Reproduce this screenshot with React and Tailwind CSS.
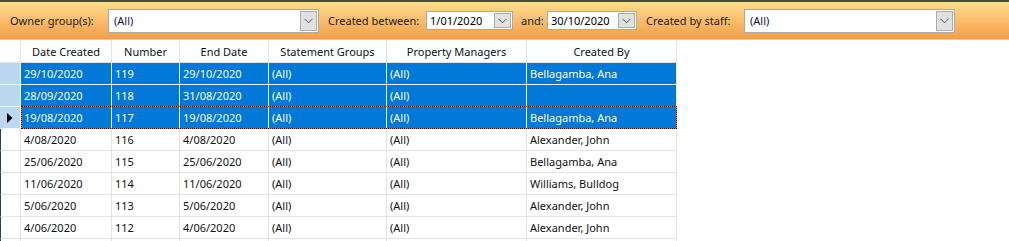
import React from 'react';

const cols = [
  { key: 'created', label: 'Date Created', w: 'w-[91px]' },
  { key: 'num', label: 'Number', w: 'w-[68px]' },
  { key: 'end', label: 'End Date', w: 'w-[89px]' },
  { key: 'groups', label: 'Statement Groups', w: 'w-[118px]' },
  { key: 'managers', label: 'Property Managers', w: 'w-[140px]' },
  { key: 'by', label: 'Created By', w: 'w-[150px]' },
];

const rows = [
  ['29/10/2020', '119', '29/10/2020', '(All)', '(All)', 'Bellagamba, Ana'],
  ['28/09/2020', '118', '31/08/2020', '(All)', '(All)', ''],
  ['19/08/2020', '117', '19/08/2020', '(All)', '(All)', 'Bellagamba, Ana'],
  ['4/08/2020', '116', '4/08/2020', '(All)', '(All)', 'Alexander, John'],
  ['25/06/2020', '115', '25/06/2020', '(All)', '(All)', 'Bellagamba, Ana'],
  ['11/06/2020', '114', '11/06/2020', '(All)', '(All)', 'Williams, Bulldog'],
  ['5/06/2020', '113', '5/06/2020', '(All)', '(All)', 'Alexander, John'],
  ['4/06/2020', '112', '4/06/2020', '(All)', '(All)', 'Alexander, John'],
  ['', '', '', '', '', ''],
];

const selected = [0, 1, 2];
const current = 2;

const Chevron = () => (
  <svg width="9" height="6" viewBox="0 0 9 6" fill="none">
    <path d="M0.5 0.8 L4.5 4.8 L8.5 0.8" stroke="#555" strokeWidth="1" />
  </svg>
);

const DropButton = ({ h }) => (
  <div className={`flex ${h} w-[17px] items-center justify-center border border-[#adadad] bg-[#e1e1e1]`}>
    <Chevron />
  </div>
);

const Combo = ({ w, value }) => (
  <div className={`flex h-[24px] ${w} shrink-0 items-center justify-between border border-[#a9a9a9] bg-white pl-[5px] pr-[1px]`}>
    <span className="text-[#1a0a4a]">{value}</span>
    <DropButton h="h-[20px]" />
  </div>
);

const DateBox = ({ w, value }) => (
  <div className={`flex h-[19px] ${w} shrink-0 items-center justify-between border border-[#a9a9a9] bg-white pl-[3px] pr-[1px]`}>
    <span className="text-black">{value}</span>
    <DropButton h="h-[15px]" />
  </div>
);

export default function App() {
  return (
    <div
      className="h-[241px] w-[1009px] overflow-hidden bg-white text-[11px] leading-none text-black"
      style={{ fontFamily: '"Noto Sans", "Open Sans", sans-serif' }}
    >
      {/* filter bar */}
      <div className="flex h-[40px] items-center border-t-2 border-b border-t-[#4a4a4a] border-b-[#cfcfcf] bg-gradient-to-b from-[#fedd90] to-[#f49d46] pl-[10px]">
        <span className="w-[98px] shrink-0 text-[#1b1b1b]">Owner group(s):</span>
        <Combo w="w-[211px]" value="(All)" />
        <span className="w-[107px] shrink-0 pl-[9px] text-[#1b1b1b]">Created between:</span>
        <DateBox w="w-[87px]" value="1/01/2020" />
        <span className="w-[34px] shrink-0 pl-[8px] text-[#1b1b1b]">and:</span>
        <DateBox w="w-[90px]" value="30/10/2020" />
        <span className="w-[107px] shrink-0 pl-[9px] text-[#1b1b1b]">Created by staff:</span>
        <Combo w="w-[211px]" value="(All)" />
      </div>

      {/* grid */}
      <div className="w-[677px]">
        <div className="flex h-[23px] border-b border-[#e3e3e3]">
          <div className="w-[21px] border-r border-[#e3e3e3]" />
          {cols.map((c) => (
            <div key={c.key} className={`${c.w} flex items-center justify-center border-r border-[#e3e3e3] text-[#111]`}>
              {c.label}
            </div>
          ))}
        </div>

        {rows.map((r, i) => {
          const sel = selected.includes(i);
          const cur = i === current;
          return (
            <div key={i} className="relative flex h-[22px]">
              <div
                className={`flex w-[21px] items-center justify-center border-r border-b ${
                  sel ? 'border-[#eef5fb] bg-[#bcd8f0]' : 'border-b-[#e3e3e3] border-r-[#e3e3e3] border-l border-l-[#2d3b55]'
                }`}
              >
                {cur && (
                  <svg width="6" height="10" viewBox="0 0 6 10">
                    <path d="M0 0 L5.5 5 L0 10 Z" fill="#000" />
                  </svg>
                )}
              </div>
              {cols.map((c, j) => (
                <div
                  key={c.key}
                  className={`${c.w} flex items-center overflow-hidden whitespace-nowrap border-r border-b pl-[3px] ${
                    sel ? 'border-[#e8f1fa] bg-[#0078d7] text-white' : 'border-[#e3e3e3] text-[#111]'
                  }`}
                >
                  {r[j]}
                </div>
              ))}
              {cur && (
                <div className="pointer-events-none absolute top-[-1px] bottom-0 left-[21px] right-0 border border-[#f08a20]">
                  <div className="absolute inset-[-1px] border border-dotted border-black" />
                </div>
              )}
            </div>
          );
        })}
      </div>
    </div>
  );
}
